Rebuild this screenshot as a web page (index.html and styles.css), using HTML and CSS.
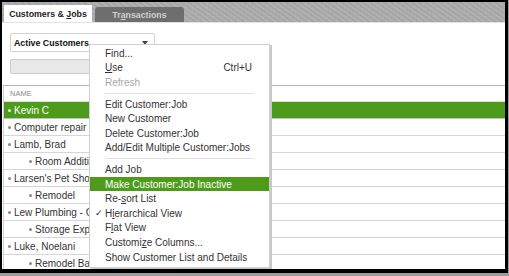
FILE: index.html
```html
<!DOCTYPE html>
<html>
<head>
<meta charset="utf-8">
<link rel="stylesheet" href="styles.css">
</head>
<body>
<div class="frame">
  <div class="tabbar">
    <div class="tab tab-active"><span>Customers &amp; <u>J</u>obs</span></div>
    <div class="tab tab-inactive"><span>Tr<u>a</u>nsactions</span></div>
  </div>
  <div class="content">
    <div class="controls">
      <div class="dropdown">
        <span class="dropdown-label">Active Customers</span>
        <span class="dropdown-arrow"></span>
      </div>
      <div class="search"></div>
    </div>
    <div class="table">
      <div class="row head-row"><span class="name head-label">NAME</span></div>
      <div class="row selected"><span class="name"><span class="dot"></span>Kevin C</span></div>
      <div class="row"><span class="name"><span class="dot"></span>Computer repair</span></div>
      <div class="row"><span class="name"><span class="dot"></span>Lamb, Brad</span></div>
      <div class="row child"><span class="name"><span class="dot"></span>Room Addition</span></div>
      <div class="row"><span class="name"><span class="dot"></span>Larsen's Pet Shop</span></div>
      <div class="row child"><span class="name"><span class="dot"></span>Remodel</span></div>
      <div class="row"><span class="name"><span class="dot"></span>Lew Plumbing - Chicago</span></div>
      <div class="row child"><span class="name"><span class="dot"></span>Storage Expansion</span></div>
      <div class="row"><span class="name"><span class="dot"></span>Luke, Noelani</span></div>
      <div class="row child"><span class="name"><span class="dot"></span>Remodel Bathroom</span></div>
    </div>
  </div>
</div>
<div class="menu">
  <div class="item"><span>Find...</span></div>
  <div class="item"><span><u>U</u>se</span><span class="shortcut">Ctrl+U</span></div>
  <div class="item disabled"><span>Refresh</span></div>
  <div class="sep"></div>
  <div class="item"><span>Edit Customer:Job</span></div>
  <div class="item"><span>New Customer</span></div>
  <div class="item"><span>Delete Customer:Job</span></div>
  <div class="item"><span>Add/Edit Multiple Customer:Jobs</span></div>
  <div class="sep"></div>
  <div class="item"><span>Add Job</span></div>
  <div class="item hover"><span>Make Customer:Job Inactive</span></div>
  <div class="item"><span>Re-<u>s</u>ort List</span></div>
  <div class="item"><span class="check">✓</span><span>H<u>i</u>erarchical View</span></div>
  <div class="item"><span>F<u>l</u>at View</span></div>
  <div class="item"><span>Customi<u>z</u>e Columns...</span></div>
  <div class="item"><span>Show Customer List and Details</span></div>
</div>
</body>
</html>
```

FILE: styles.css
```css
html, body {
  margin: 0;
  padding: 0;
}
body {
  width: 509px;
  height: 276px;
  background: #9c9c9c;
  position: relative;
  overflow: hidden;
  font-family: "Liberation Sans", Arial, sans-serif;
  color: #333;
}
.frame {
  width: 503px;
  height: 267px;
  border-style: solid;
  border-color: #000;
  border-width: 2px 3px 4px 2px;
  background: #fff;
  display: flex;
  flex-direction: column;
  overflow: hidden;
}
.tabbar {
  height: 21px;
  flex: none;
  background-color: #ababab;
  background-image: repeating-linear-gradient(35deg, rgba(255,255,255,0.06) 0 2px, rgba(0,0,0,0.03) 2px 4px);
  display: flex;
  align-items: flex-end;
  padding-left: 2px;
  gap: 3px;
  border-bottom: 1px solid #e2e2e2;
  box-sizing: border-box;
}
.tab {
  font-size: 8.8px;
  font-weight: bold;
  display: flex;
  align-items: center;
  justify-content: center;
  box-sizing: border-box;
  white-space: nowrap;
}
.tab-active {
  background: #fff;
  width: 88px;
  height: 17px;
  color: #222;
}
.tab-inactive {
  background: #6e6e6e;
  color: #cfcfcf;
  width: 89px;
  height: 15px;
  border-radius: 3px 3px 0 0;
}
.content {
  flex: 1;
  display: flex;
  flex-direction: column;
}
.controls {
  padding: 10px 0 0 8px;
  display: flex;
  flex-direction: column;
  gap: 7px;
}
.dropdown {
  width: 145px;
  height: 19px;
  box-sizing: border-box;
  border: 1px solid #d2d2d2;
  border-radius: 2px;
  display: flex;
  align-items: center;
  justify-content: space-between;
  padding: 0 6px 0 3px;
}
.dropdown-label {
  font-size: 8.8px;
  font-weight: bold;
  color: #111;
}
.dropdown-arrow {
  width: 0;
  height: 0;
  border-left: 3px solid transparent;
  border-right: 3px solid transparent;
  border-top: 4px solid #444;
}
.search {
  width: 145px;
  height: 15px;
  box-sizing: border-box;
  border: 1px solid #cdcdcd;
  border-radius: 2px;
  background: #e8e8e8;
}
.table {
  margin-top: 11px;
  margin-left: 1px;
  border-left: 1px solid #d0d0d0;
  border-top: 1px solid #b4b4b4;
}
.row {
  height: 17px;
  box-sizing: border-box;
  border-bottom: 1px solid #d6d6d6;
  display: flex;
  align-items: center;
  font-size: 10px;
  padding-left: 4px;
  color: #333;
  white-space: nowrap;
}
.name {
  display: flex;
  align-items: center;
  width: 82px;
  overflow: hidden;
  flex: none;
}
.row.child { padding-left: 25px; }
.row.child .name { width: 61px; }
.head-row {
  height: 16px;
  border-bottom: 1px solid #dcdcdc;
  padding-left: 6px;
}
.head-label {
  font-size: 7.5px;
  color: #8a8a8a;
}
.row.selected {
  background: #4e9b1c;
  color: #fff;
  border-bottom-color: #c0c0c0;
}
.dot {
  width: 3px;
  height: 3px;
  border-radius: 50%;
  background: #888;
  margin-right: 3px;
  flex: none;
}
.selected .dot { background: #e6f0de; }
.menu {
  position: absolute;
  left: 89px;
  top: 44px;
  width: 181px;
  box-sizing: border-box;
  background: #fff;
  border: 1px solid #cfcfcf;
  box-shadow: 2px 1px 0 #c8c8c8;
  padding: 1px 0 3px 0;
  font-size: 10px;
  color: #333;
}
.item {
  height: 14.6px;
  display: flex;
  align-items: center;
  justify-content: space-between;
  padding: 0 17px 0 15px;
  position: relative;
  white-space: nowrap;
}
.item.disabled { color: #a8a8a8; }
.item.hover {
  background: #4e9b1c;
  color: #fff;
}
.check {
  position: absolute;
  left: 5px;
  font-size: 9px;
  color: #222;
}
.shortcut { color: #333; }
.sep {
  height: 7px;
  display: flex;
  align-items: center;
}
.sep::after {
  content: "";
  display: block;
  width: 100%;
  margin: 0 15px 0 15px;
  border-top: 1px solid #e0e0e0;
}
```
